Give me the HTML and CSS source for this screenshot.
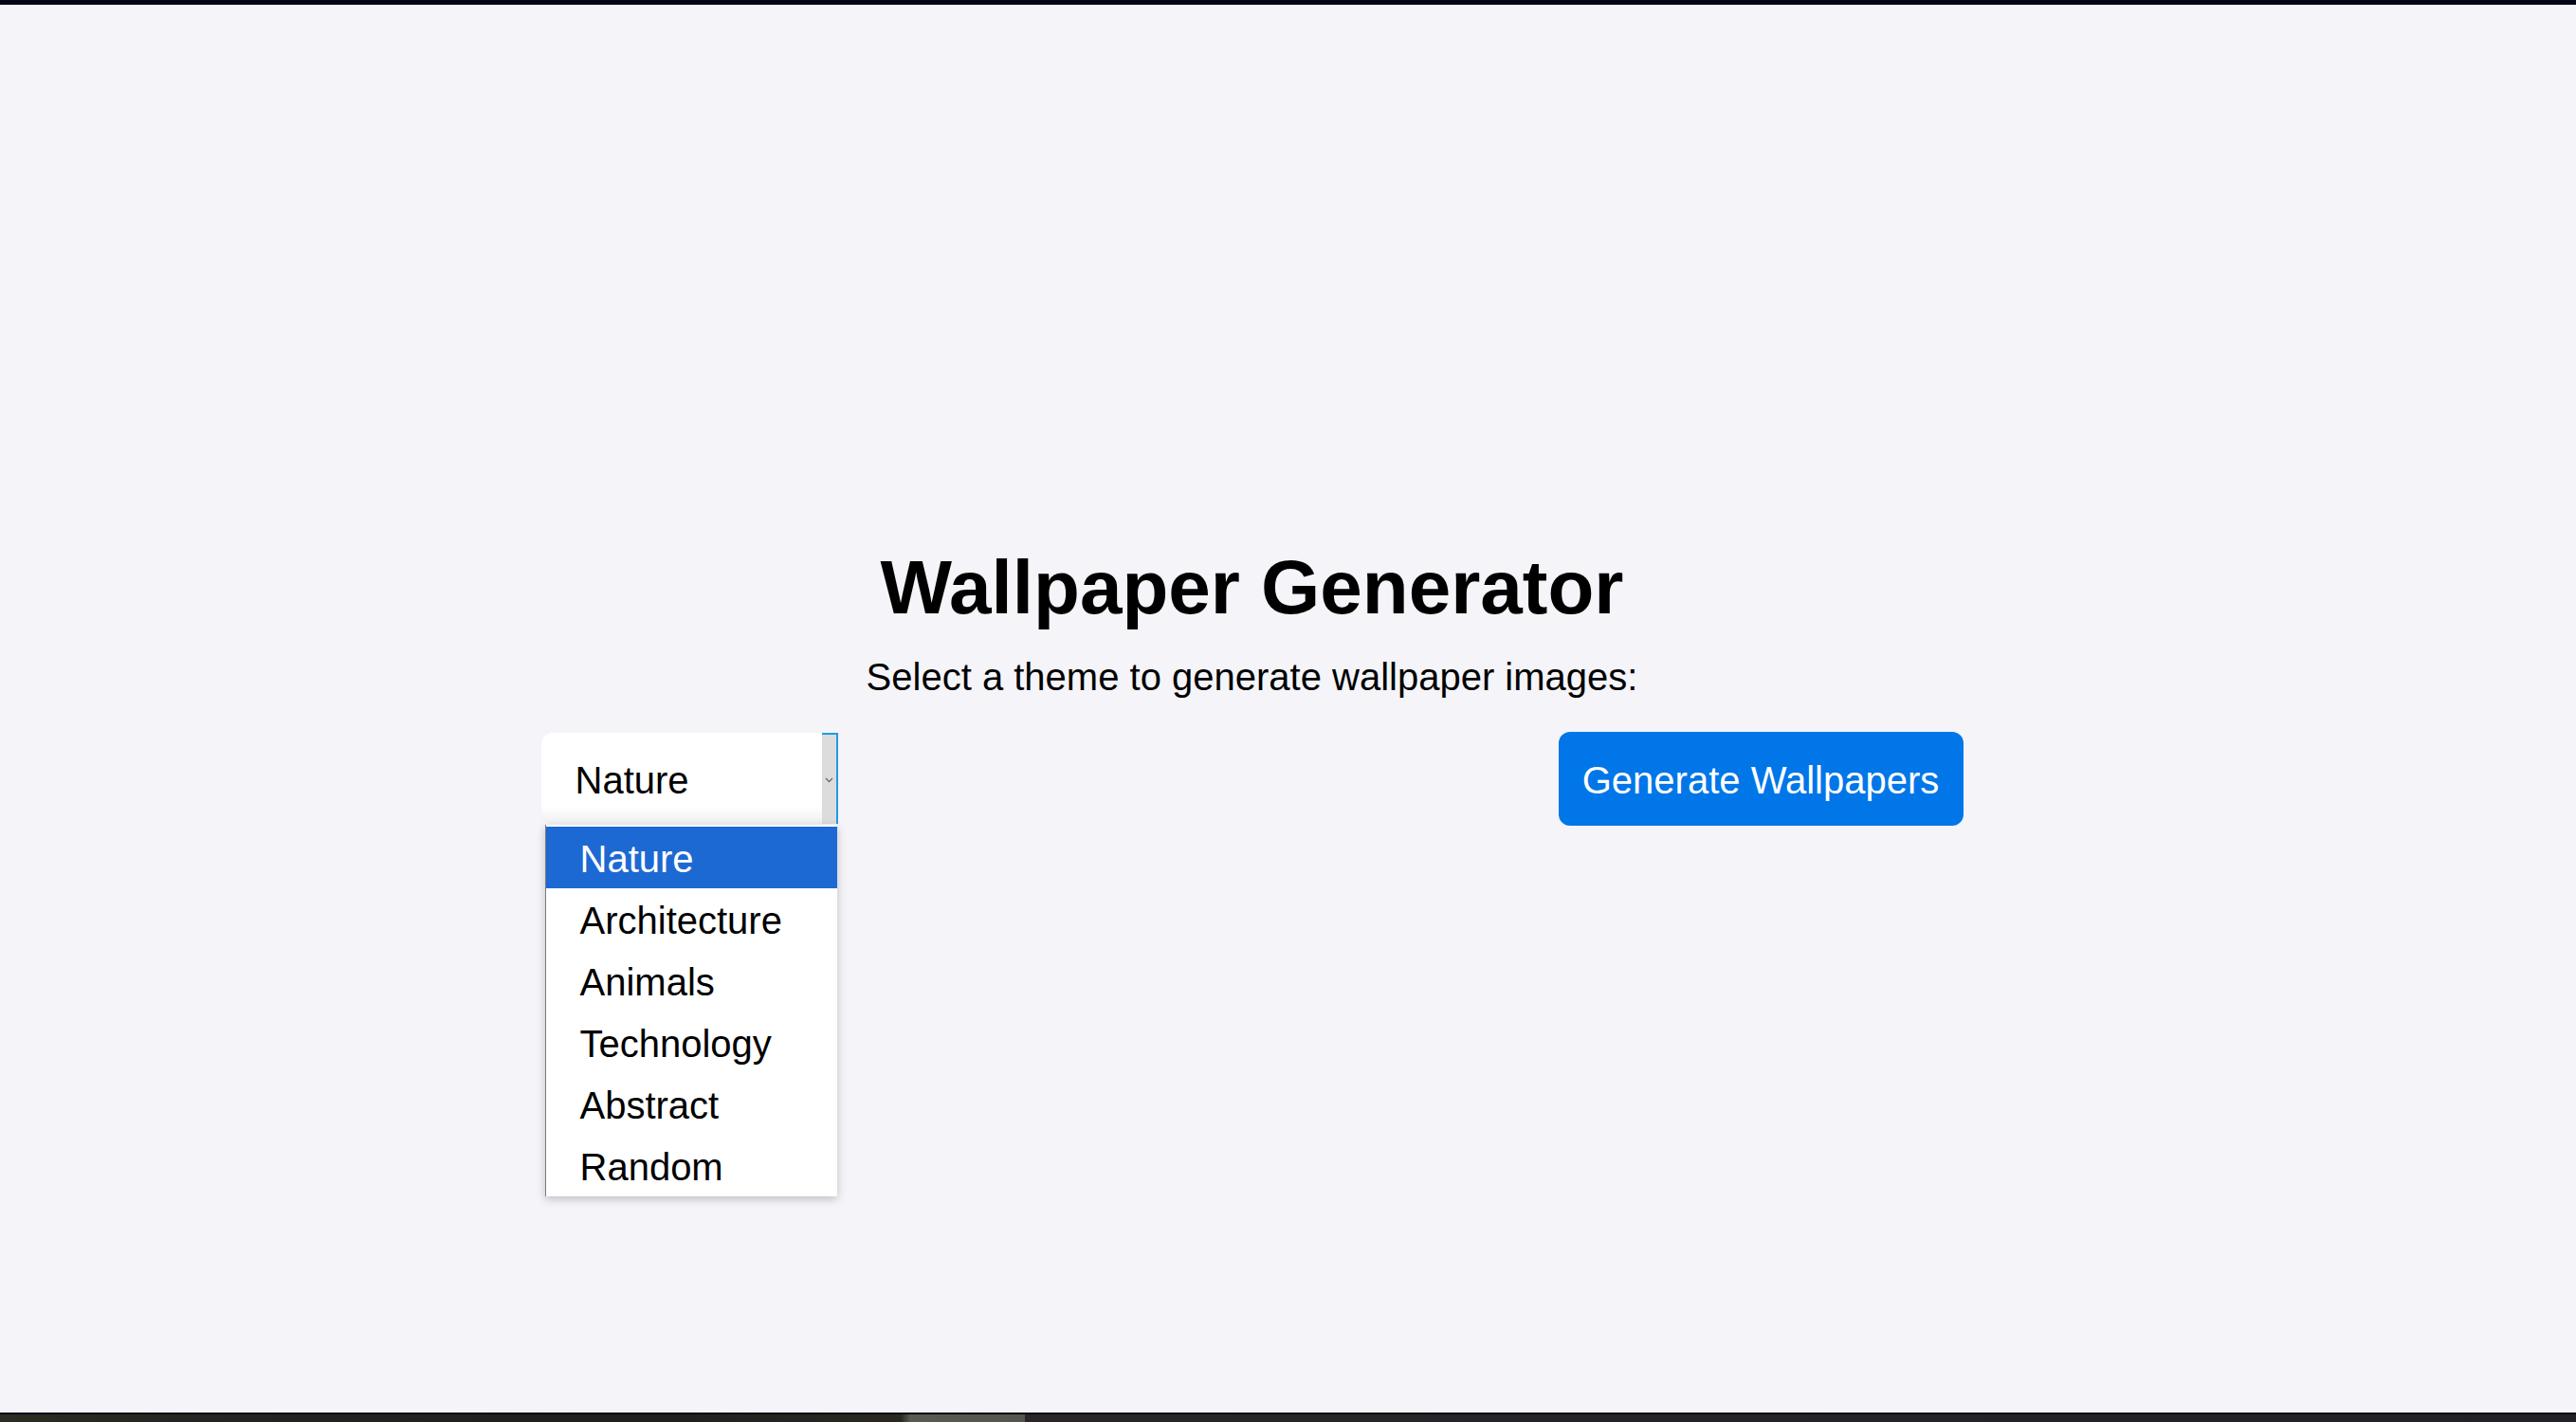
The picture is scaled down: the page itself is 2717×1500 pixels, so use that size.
FILE: index.html
```html
<!DOCTYPE html>
<html lang="en">
<head>
<meta charset="utf-8">
<title>Wallpaper Generator</title>
<link rel="stylesheet" href="styles.css">
</head>
<body>
<div class="topbar"></div>
<main class="app">
  <h1 class="title">Wallpaper Generator</h1>
  <p class="subtitle">Select a theme to generate wallpaper images:</p>
  <div class="controls">
    <div class="select-wrap">
      <div class="select">
        <span class="select-value">Nature</span>
        <span class="select-arrow">
          <svg width="9" height="6" viewBox="0 0 9 6"><path d="M1 1 L4.5 4.5 L8 1" fill="none" stroke="#6b6b6b" stroke-width="1.3"/></svg>
        </span>
      </div>
      <ul class="dropdown">
        <li class="option selected">Nature</li>
        <li class="option">Architecture</li>
        <li class="option">Animals</li>
        <li class="option">Technology</li>
        <li class="option">Abstract</li>
        <li class="option">Random</li>
      </ul>
    </div>
    <button class="generate">Generate Wallpapers</button>
  </div>
</main>
<div class="taskbar">
  <div class="taskbar-line"></div>
  <div class="taskbar-strip"></div>
</div>
</body>
</html>
```

FILE: styles.css
```css
html, body {
  margin: 0;
  padding: 0;
}

body {
  width: 2717px;
  height: 1500px;
  background: #f4f4f9;
  font-family: "Liberation Sans", Arial, sans-serif;
  color: #000;
  overflow: hidden;
  position: relative;
  padding-right: 76px;
  box-sizing: border-box;
}

.topbar {
  height: 5px;
  margin-right: -76px;
  background: #030617;
}

.app {
  width: 1500px;
  margin: 0 auto;
  padding-top: 569px;
  display: flex;
  flex-direction: column;
  align-items: center;
}

.title {
  margin: 0;
  font-size: 80px;
  line-height: 92px;
  font-weight: bold;
}

.subtitle {
  margin: 25px 0 0;
  font-size: 40px;
  line-height: 46px;
}

.controls {
  align-self: stretch;
  margin-top: 36px;
  display: flex;
  justify-content: space-between;
  align-items: flex-start;
}

.select-wrap {
  position: relative;
  width: 313px;
}

.select {
  height: 96px;
  display: flex;
  align-items: stretch;
  background: linear-gradient(#ffffff 0, #ffffff 80%, #f0f0f2 100%);
  border-radius: 12px 0 0 12px;
}

.select-value {
  flex: 1;
  display: flex;
  align-items: center;
  padding: 4px 0 0 36px;
  font-size: 40px;
}

.select-arrow {
  width: 15px;
  background: #dcdcdc;
  border-top: 2px solid #1e9be6;
  border-right: 2px solid #1e9be6;
  display: flex;
  align-items: center;
  justify-content: center;
}

.select-arrow svg {
  margin-top: 2px;
}

.dropdown {
  position: absolute;
  top: 97px;
  left: 4px;
  width: 308px;
  margin: 0;
  padding: 2px 0 0;
  list-style: none;
  background: #fff;
  border-left: 1px solid #7a7a7a;
  box-sizing: border-box;
  box-shadow: 0 3px 9px rgba(0, 0, 0, 0.22);
  z-index: 2;
}

.option {
  height: 65px;
  box-sizing: border-box;
  padding: 3px 0 0 36px;
  line-height: 62px;
  font-size: 40px;
  color: #000;
}

.option.selected {
  background: #1d69d3;
  color: #fff;
}

.generate {
  margin-top: -1px;
  width: 427px;
  height: 99px;
  padding: 3px 0 0;
  border: 0;
  border-radius: 12px;
  background: #0076e8;
  color: #fff;
  font-family: "Liberation Sans", Arial, sans-serif;
  font-size: 40px;
}

.taskbar {
  position: absolute;
  left: 0;
  right: 0;
  bottom: 0;
  height: 10px;
}

.taskbar-line {
  height: 2px;
  background: #050814;
}

.taskbar-strip {
  height: 8px;
  background: linear-gradient(to right, #2c2c22 0, #222220 300px, #20201e 700px, #2a2820 950px, #5a5a50 960px, #56544e 1081px, #2a2628 1081px, #252428 1600px, #222226 2717px);
}
```
